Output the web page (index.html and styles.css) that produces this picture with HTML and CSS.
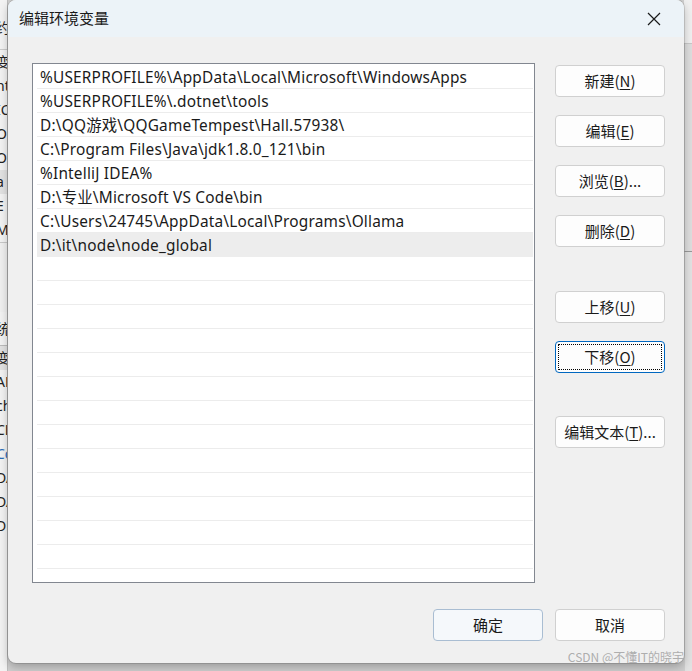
FILE: index.html
```html
<!DOCTYPE html>
<html lang="zh-CN">
<head>
<meta charset="utf-8">
<title>编辑环境变量</title>
<link rel="stylesheet" href="styles.css">
</head>
<body>
<div class="desk">
  <div class="backdrop-left">
    <div class="bl-top">
      <span>约</span><span>变</span><span>nt</span><span>IC</span><span>Or</span><span>Or</span><span class="hl">a</span><span>E</span><span>M</span>
    </div>
    <div class="bl-mid"></div>
    <div class="bl-bot">
      <span>统</span><span class="hl">变</span><span>AF</span><span>ch</span><span>CL</span><span class="blue">Co</span><span>DA</span><span>DA</span><span>DE</span>
    </div>
  </div>

  <div class="dialog">
    <div class="titlebar">
      <span class="title">编辑环境变量</span>
      <svg class="close" width="14" height="14" viewBox="0 0 14 14"><path d="M1 1 L13 13 M13 1 L1 13" stroke="#1a1a1a" stroke-width="1.2" fill="none"/></svg>
    </div>
    <div class="body">
      <div class="main">
        <div class="list">
          <div class="row">%USERPROFILE%\AppData\Local\Microsoft\WindowsApps</div>
          <div class="row">%USERPROFILE%\.dotnet\tools</div>
          <div class="row">D:\QQ游戏\QQGameTempest\Hall.57938\</div>
          <div class="row">C:\Program Files\Java\jdk1.8.0_121\bin</div>
          <div class="row">%IntelliJ IDEA%</div>
          <div class="row">D:\专业\Microsoft VS Code\bin</div>
          <div class="row">C:\Users\24745\AppData\Local\Programs\Ollama</div>
          <div class="row selected">D:\it\node\node_global</div>
          <div class="row"></div><div class="row"></div><div class="row"></div><div class="row"></div>
          <div class="row"></div><div class="row"></div><div class="row"></div><div class="row"></div>
          <div class="row"></div><div class="row"></div><div class="row"></div><div class="row"></div>
          <div class="row"></div><div class="row"></div>
        </div>
        <div class="side">
          <button class="btn">新建(<u>N</u>)</button>
          <button class="btn g1">编辑(<u>E</u>)</button>
          <button class="btn g1">浏览(<u>B</u>)...</button>
          <button class="btn g1">删除(<u>D</u>)</button>
          <button class="btn g2">上移(<u>U</u>)</button>
          <button class="btn g1 focused">下移(<u>O</u>)</button>
          <button class="btn g3">编辑文本(<u>T</u>)...</button>
        </div>
      </div>
      <div class="footer">
        <button class="btn default">确定</button>
        <button class="btn">取消</button>
      </div>
    </div>
    <div class="watermark">CSDN @不懂IT的晓宇</div>
  </div>

  <div class="backdrop-right">
    <div class="br-a"></div>
    <div class="br-b"></div>
    <div class="br-c"></div>
  </div>
</div>
</body>
</html>
```

FILE: styles.css
```css
* { box-sizing: border-box; }
html, body { margin: 0; padding: 0; }
body {
  width: 692px;
  height: 671px;
  overflow: hidden;
  background: #cfcfcf;
  font-family: "Noto Sans", "Noto Sans CJK SC", sans-serif;
  color: #1a1a1a;
}
.desk {
  display: flex;
  height: 671px;
}
.backdrop-left {
  width: 8px;
  flex: none;
  display: flex;
  flex-direction: column;
  overflow: hidden;
  background: #f3f3f3;
  border-right: 1px solid #bdbdbd;
}
.bl-top, .bl-bot {
  display: flex;
  flex-direction: column;
  font-size: 14px;
  line-height: 24px;
  white-space: nowrap;
  margin-left: -4px;
  color: #222;
}
.bl-top { padding-top: 8px; }
.bl-top span:first-child { height: 42px; line-height: 40px; border-bottom: 1px solid #ccc; }
.bl-mid { height: 70px; border-top: 1px solid #c8c8c8; background: #f0f0f0; }
.bl-bot span:first-child { height: 34px; line-height: 34px; border-bottom: 1px solid #bbb; }
.bl-bot span.hl, .bl-top span.hl { background: #e2e2e2; }
.bl-bot .blue { color: #2a6cb8; }
.bl-bot { background: #f3f3f3; flex: 1; }

.dialog {
  position: relative;
  width: 676px;
  height: 663px;
  flex: none;
  background: #f0f0f0;
  border-radius: 8px;
  box-shadow: 0 0 0 1px rgba(0,0,0,0.12), 0 4px 10px rgba(0,0,0,0.25);
  overflow: hidden;
  display: flex;
  flex-direction: column;
}
.titlebar {
  height: 37px;
  flex: none;
  background: #ecf3f8;
  display: flex;
  align-items: center;
  justify-content: space-between;
  padding: 0 23px 2px 11px;
}
.title {
  font-family: "Noto Sans CJK SC", sans-serif;
  font-size: 15px;
  color: #1a1a1a;
}
.close { display: block; margin-top: 2px; }
.body {
  flex: 1;
  display: flex;
  flex-direction: column;
  padding: 26px 19px 0 24px;
}
.main {
  display: flex;
  gap: 20px;
}
.list {
  width: 504px;
  height: 520px;
  background: #fff;
  border: 1px solid #828790;
  padding: 1px 1px 0 4px;
  overflow: hidden;
}
.row {
  height: 24px;
  line-height: 25px;
  border-bottom: 1px solid #ececec;
  padding-left: 3px;
  font-size: 15.4px;
  letter-spacing: 0.2px;
  white-space: nowrap;
  color: #1a1a1a;
  font-family: "Noto Sans", "Noto Sans CJK SC", sans-serif;
}
.row.selected { background: #ededed; border-bottom-color: #ededed; }

.side {
  display: flex;
  flex-direction: column;
  width: 110px;
  padding-top: 2px;
}
.btn {
  position: relative;
  width: 110px;
  height: 32px;
  flex: none;
  background: #fdfdfd;
  border: 1px solid #d0d0d0;
  border-radius: 4px;
  font-family: "Noto Sans CJK SC", sans-serif;
  font-size: 15px;
  color: #1a1a1a;
  padding: 0 0 2px 0;
  text-align: center;
}
.btn u { text-decoration-thickness: 1px; text-underline-offset: 2px; }
.g1 { margin-top: 18px; }
.g2 { margin-top: 44px; }
.g3 { margin-top: 43px; }
.focused {
  border: 1px solid #0067c0;
  box-shadow: inset 0 0 0 1px #fdfdfd;
}
.focused::after {
  content: "";
  position: absolute;
  inset: 2px;
  border: 1px dotted #000;
  border-radius: 1px;
}
.footer {
  display: flex;
  justify-content: flex-end;
  gap: 12px;
  margin-top: 26px;
}
.default {
  background: #f5f8fb;
  border-color: #a9bdd2;
}
.watermark {
  position: absolute;
  right: 0;
  bottom: -2px;
  font-family: "Noto Sans CJK SC", sans-serif;
  font-size: 12px;
  color: rgba(165,165,165,0.9);
}
.backdrop-right {
  width: 8px;
  flex: none;
  display: flex;
  flex-direction: column;
  background: #e6e6e6;
}
.br-a { height: 44px; background: #f0f0f0; border-bottom: 1px solid #c8c8c8; }
.br-b { height: 208px; background: #dedede; border-bottom: 1px solid #999; border-left: 1px solid #cfcfcf; }
.br-c { flex: 1; background: #e2e2e2; border-left: 1px solid #d0d0d0; }
```
